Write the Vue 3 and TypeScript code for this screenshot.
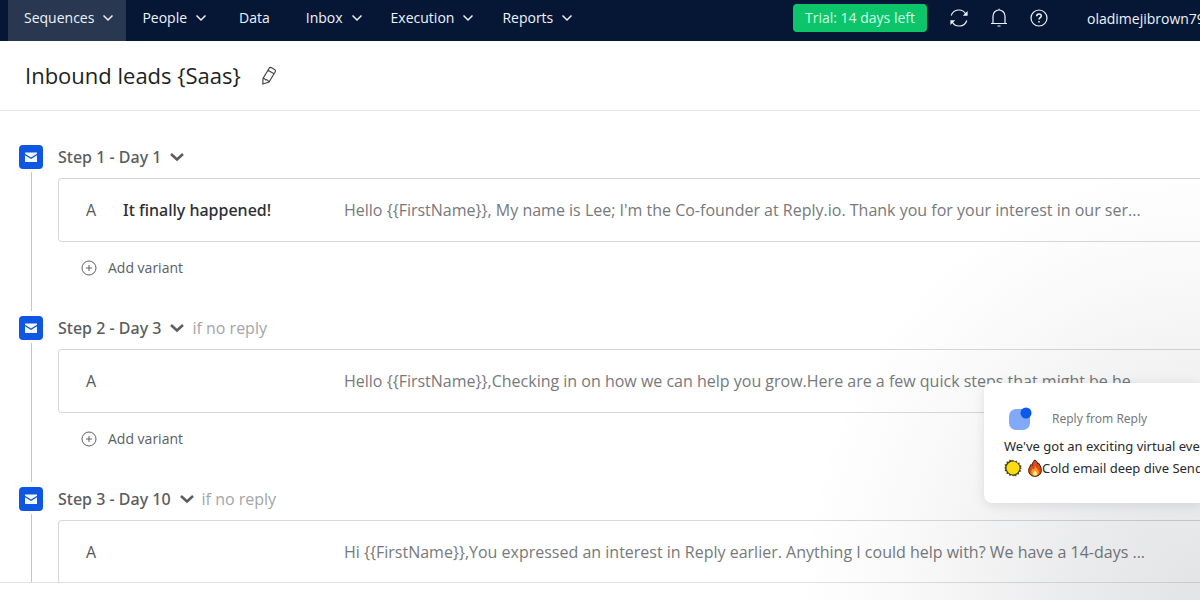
<script setup lang="ts">
interface NavItem {
  label: string
  menu: boolean
  active?: boolean
}

interface Step {
  title: string
  condition?: string
  subject: string
  preview: string
}

const navItems: NavItem[] = [
  { label: 'Sequences', menu: true, active: true },
  { label: 'People', menu: true },
  { label: 'Data', menu: false },
  { label: 'Inbox', menu: true },
  { label: 'Execution', menu: true },
  { label: 'Reports', menu: true },
]

const steps: Step[] = [
  {
    title: 'Step 1 - Day 1',
    subject: 'It finally happened!',
    preview:
      "Hello {{FirstName}}, My name is Lee; I'm the Co-founder at Reply.io. Thank you for your interest in our ser...",
  },
  {
    title: 'Step 2 - Day 3',
    condition: 'if no reply',
    subject: '',
    preview:
      'Hello {{FirstName}},Checking in on how we can help you grow.Here are a few quick steps that might be he...',
  },
  {
    title: 'Step 3 - Day 10',
    condition: 'if no reply',
    subject: '',
    preview:
      'Hi {{FirstName}},You expressed an interest in Reply earlier. Anything I could help with? We have a 14-days ...',
  },
]
</script>

<template>
  <div class="page">
    <header class="topbar">
      <nav class="nav">
        <template v-for="item in navItems" :key="item.label">
          <button v-if="item.menu" type="button" class="nav-item" :class="{ active: item.active }">
            {{ item.label }}
            <svg class="nav-chevron" viewBox="0 0 12 8" aria-hidden="true">
              <path d="M1.500 1.500 6 6l4.500-4.500" />
            </svg>
          </button>
          <a v-else href="#" class="nav-item plain">{{ item.label }}</a>
        </template>
      </nav>
      <div class="tools">
        <a href="#" class="trial">Trial: 14 days left</a>
        <button type="button" class="tool" aria-label="Sync">
          <svg viewBox="0 0 20 20" aria-hidden="true">
            <path d="M2.200 7.500A8 8 0 0 1 17 6.500M17.800 12.500A8 8 0 0 1 3 13.500" />
            <path class="solid" d="M18.600 3v4.800h-4.800zM1.400 17v-4.800h4.800z" />
          </svg>
        </button>
        <button type="button" class="tool" aria-label="Notifications">
          <svg viewBox="0 0 20 20" aria-hidden="true">
            <path d="M2 15.500h16M4 15.500V8a6 6 0 0 1 12 0v7.500M10 2V.800M8.500 18h3" />
          </svg>
        </button>
        <button type="button" class="tool" aria-label="Help">
          <svg viewBox="0 0 20 20" aria-hidden="true">
            <circle cx="10" cy="10" r="8" />
            <path class="thick" d="M7.700 8.200C7.700 5.200 12.300 5.200 12.300 8c0 1.700-2.300 1.700-2.300 3.500M10 13v1.500" />
          </svg>
        </button>
        <a href="#" class="account">oladimejibrown79</a>
      </div>
    </header>

    <section class="titlebar">
      <h1>Inbound leads {Saas}</h1>
      <button type="button" class="edit" aria-label="Rename sequence">
        <svg viewBox="0 0 16 20" aria-hidden="true">
          <path d="M1.800 18 2 12.500 8.200 2.200q.8-1.200 2-.6l3.700 2.100q1.100.8.4 2L8 16ZM2 12.500q1.500-.5 2.500 1.300 2-.5 3.500 2.200M7 4.300l6 3.500" />
        </svg>
      </button>
    </section>

    <main class="sequence">
      <section v-for="(step, index) in steps" :key="step.title" class="step">
        <div class="rail">
          <span class="mail">
            <svg viewBox="0 0 24 24" aria-hidden="true">
              <path d="M6 7.500h12v1.200l-6 3.800-6-3.800zM6 10.200l6 3.800 6-3.800V17H6z" />
            </svg>
          </span>
        </div>
        <div class="step-body">
          <div class="step-head">
            <button type="button" class="step-title">
              {{ step.title }}
              <svg class="step-chevron" viewBox="0 0 14 10" aria-hidden="true">
                <path d="M1 2l6 5.500L13 2" />
              </svg>
            </button>
            <span v-if="step.condition" class="condition">{{ step.condition }}</span>
          </div>
          <article class="card">
            <span class="variant">A</span>
            <strong class="subject">{{ step.subject }}</strong>
            <span class="preview">{{ step.preview }}</span>
          </article>
          <button v-if="index < steps.length - 1" type="button" class="add">
            <svg viewBox="0 0 16 16" aria-hidden="true">
              <circle cx="8" cy="8" r="7" />
              <path d="M8 5v6M5 8h6" />
            </svg>
            Add variant
          </button>
        </div>
      </section>
    </main>
    <footer class="footer"></footer>

    <div class="haze" aria-hidden="true"></div>

    <aside class="popup">
      <div class="popup-head">
        <svg class="popup-logo" viewBox="0 0 24 24" aria-hidden="true">
          <rect x="1" y="2" width="21" height="21" rx="7" fill="#82a9f7" />
          <circle cx="18" cy="6" r="5.500" fill="#0c58ea" />
        </svg>
        <span>Reply from Reply</span>
      </div>
      <p>We've got an exciting virtual event</p>
      <p>
        <svg class="sun" viewBox="0 0 18 18" role="img" aria-label="Sun">
          <path
            d="M9 .8l1.500 1.800 2.100-1 .7 2.200 2.300-.1-.1 2.300 2.200.7-1 2.100L18 9l-1.800 1.300 1 2.100-2.200.7.1 2.300-2.300-.1-.7 2.200-2.100-1L9 17.500l-1.300-1.500-2.100 1-.7-2.200-2.300.1.100-2.300-2.200-.7 1-2.100L0 9l1.500-1.300-1-2.100 2.200-.7-.1-2.300 2.300.1.700-2.200 2.100 1Z"
            fill="#4a430f"
          />
          <circle cx="9" cy="9" r="6.500" fill="#fbdc12" />
        </svg>
        <svg class="fire" viewBox="0 0 14 18" role="img" aria-label="Fire">
          <path
            d="M6.500 1C9 2 9.500 3.500 9.700 5l1-.8C12.500 7 13.300 9 13.300 11.500c0 3.500-2.500 5.800-6.300 5.800S.7 15 .7 11.500C.7 9 2 7.500 3 5.500l1 1C4 4 5.500 3 6.500 1Z"
            fill="#df4b18"
            stroke="#30180c"
          />
          <path d="M7.500 7c0 2 3.300 3 3.300 6 0 2.500-1.800 3.700-3.800 3.700S3.200 15.500 3.200 13c0-1.500.8-2.500 1.500-3.500l1 1C6.500 9.500 7 8.500 7.500 7Z" fill="#fb9b1c" />
          <path d="M7 11.500c1 1 2 1.800 2 3 0 1.500-1 2-2 2s-2-.5-2-2c0-1.200 1-2 2-3Z" fill="#fff0a0" />
        </svg>Cold email deep dive Send
      </p>
    </aside>
  </div>
</template>

<style>
body {
  margin: 0;
}
</style>

<style scoped>
.page {
  position: relative;
  display: flex;
  flex-direction: column;
  height: 100vh;
  overflow: hidden;
  background: #fff;
  color: #555759;
  font-family: "Open Sans", "Noto Sans", sans-serif;
  font-size: 16px;
}

button {
  padding: 0;
  border: 0;
  background: none;
  color: inherit;
  font: inherit;
  cursor: pointer;
}

a {
  color: inherit;
  text-decoration: none;
}

svg {
  display: block;
  flex: none;
  fill: none;
  stroke: currentColor;
}

.topbar {
  display: flex;
  flex: none;
  justify-content: space-between;
  height: 41px;
  padding-left: 8px;
  background: #061736;
  color: #eef3fb;
  font-size: 14px;
}

.nav {
  display: flex;
}

.nav-item {
  display: flex;
  align-items: center;
  gap: 8px;
  padding: 0 12px 6px 16px;
  white-space: nowrap;
}

.nav-item.active {
  background: #293750;
}

.nav-item.plain {
  padding: 0 20px 6px;
}

.nav-chevron {
  width: 12px;
  height: 8px;
  stroke-width: 1.5;
}

.tools {
  display: flex;
  align-items: center;
  gap: 20px;
  padding-bottom: 5px;
  white-space: nowrap;
}

.trial {
  margin-right: 2px;
  padding: 0 12px;
  border-radius: 4px;
  background: #0cc56b;
  color: #d3fbe5;
  line-height: 28px;
}

.tool svg {
  width: 20px;
  height: 20px;
  stroke-width: 1.2;
}

.tool .thick {
  stroke-width: 1.5;
}

.tool .solid {
  fill: currentColor;
  stroke: none;
}

.account {
  width: 113px;
  margin-left: 18px;
  overflow: hidden;
}

.titlebar {
  display: flex;
  flex: none;
  align-items: center;
  gap: 20px;
  height: 69px;
  padding-left: 25px;
  border-bottom: 1px solid #e6e7e8;
}

h1 {
  margin: 0;
  padding-bottom: 2px;
  color: #1d1f22;
  font-size: 22px;
  font-weight: 400;
}

.edit svg {
  width: 16px;
  height: 20px;
  stroke: #45484b;
  stroke-width: 1.2;
}

.sequence {
  flex: 1;
  min-height: 0;
  padding: 34px 0 0 19px;
  overflow: hidden;
}

.step {
  display: flex;
  gap: 15px;
  height: 171px;
}

.rail {
  display: flex;
  flex: none;
  flex-direction: column;
  width: 24px;
}

.rail::after {
  flex: 1;
  width: 1px;
  margin: 3px 0 5px 12px;
  background: #c3c5c7;
  content: "";
}

.mail {
  border-radius: 4px;
  background: #0f57e3;
}

.mail svg {
  width: 24px;
  height: 24px;
  fill: #f2f8ff;
  stroke: none;
}

.step-body {
  flex: 1;
  min-width: 0;
}

.step-head {
  display: flex;
  align-items: center;
  gap: 8px;
  height: 24px;
  margin-bottom: 9px;
}

.step-title {
  display: flex;
  align-items: center;
  gap: 9px;
  color: #5a5c5f;
  font-family: "Noto Sans", "Open Sans", sans-serif;
  font-weight: 500;
}

.step-chevron {
  width: 14px;
  height: 10px;
  stroke-width: 2.5;
}

.condition {
  color: #a3a5a7;
}

.card {
  display: flex;
  align-items: center;
  height: 62px;
  padding-left: 27px;
  border: 1px solid #d6d8da;
  border-right: 0;
  border-radius: 4px 0 0 4px;
  white-space: nowrap;
}

.variant {
  flex: none;
  width: 37px;
}

.subject {
  flex: none;
  width: 221px;
  color: #2c2e32;
  font-family: "Noto Sans", "Open Sans", sans-serif;
  font-weight: 500;
}

.preview {
  color: #77797b;
}

.add {
  display: flex;
  align-items: center;
  gap: 11px;
  margin: 16px 0 0 23px;
  color: #5c5e60;
  font-size: 14px;
}

.add svg {
  width: 16px;
  height: 16px;
}

.footer {
  flex: none;
  height: 17px;
  border-top: 1px solid #e0e1e2;
}

.haze {
  position: absolute;
  right: 0;
  bottom: 0;
  width: 400px;
  height: 440px;
  background: radial-gradient(
    100% 100% at 100% 100%,
    rgba(40, 45, 60, 0.13),
    rgba(40, 45, 60, 0.09) 35%,
    rgba(40, 45, 60, 0.03) 72%,
    transparent 100%
  );
  pointer-events: none;
}

.popup {
  position: absolute;
  right: 0;
  bottom: 97px;
  box-sizing: border-box;
  width: 216px;
  height: 120px;
  padding: 23px 0 0 20px;
  overflow: hidden;
  border-radius: 8px 0 0 8px;
  background: #fff;
  box-shadow: 0 2px 12px rgba(0, 0, 0, 0.1);
  color: #28292b;
  font-family: "Noto Sans", "Open Sans", sans-serif;
  font-size: 13px;
  line-height: 22px;
  white-space: nowrap;
}

.popup-head {
  display: flex;
  align-items: center;
  gap: 20px;
  height: 26px;
  margin-bottom: 3px;
  padding-left: 4px;
  color: #77797b;
  font-size: 12px;
}

.popup-logo {
  width: 24px;
  height: 24px;
  stroke: none;
}

.popup p {
  display: flex;
  align-items: center;
  margin: 0;
}

.sun {
  width: 18px;
  height: 18px;
  margin-right: 6px;
  stroke: none;
}

.fire {
  width: 14px;
  height: 18px;
  stroke: none;
}
</style>
